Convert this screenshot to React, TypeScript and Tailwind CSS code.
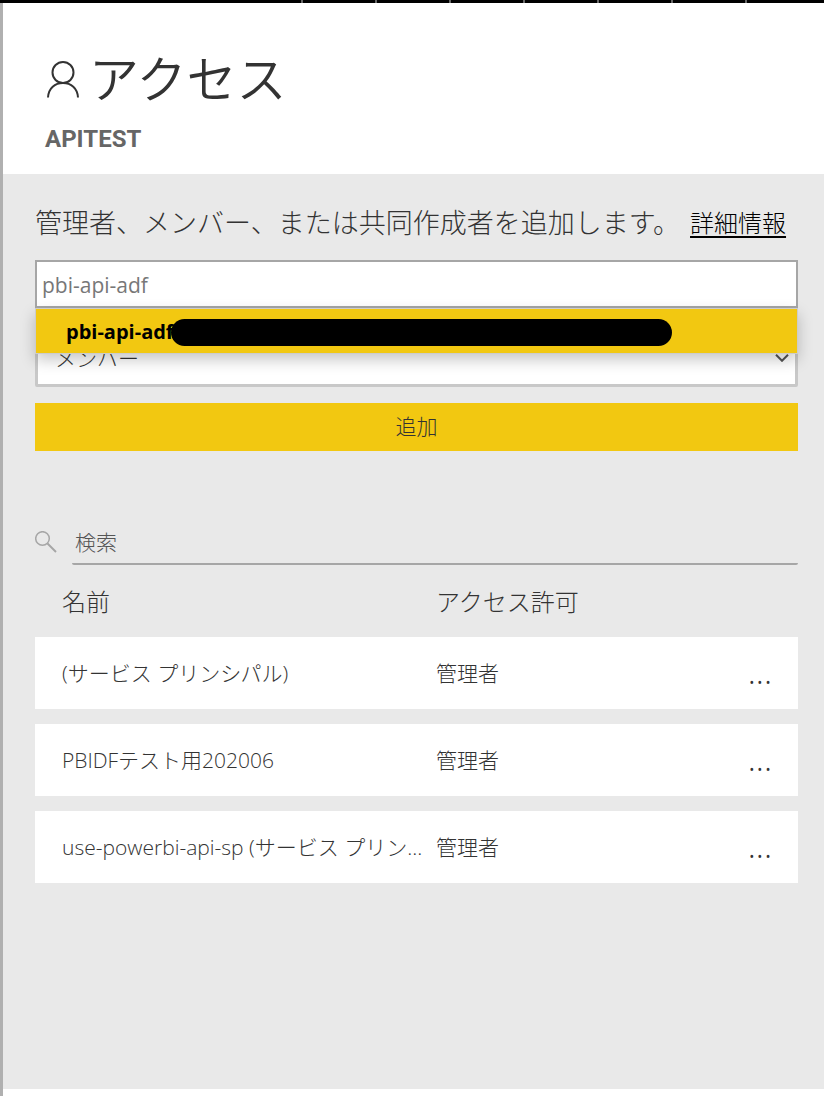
import { useState } from "react";

const ticks = [0, 1, 2, 3, 4, 5, 6];

const members = [
  { name: "(サービス プリンシパル)", role: "管理者" },
  { name: "PBIDFテスト用202006", role: "管理者" },
  { name: "use-powerbi-api-sp (サービス プリン...", role: "管理者" },
];

function PersonIcon() {
  return (
    <svg className="h-[37px] w-8 shrink-0" viewBox="0 0 32 37" fill="none" stroke="#333" strokeWidth="2" aria-hidden="true">
      <circle cx="16" cy="11.5" r="10.5" />
      <path d="M1 36.5C1.500 27 8 22 16 22s14.500 5 15 14.500" />
    </svg>
  );
}

function SearchIcon() {
  return (
    <svg className="h-[22px] w-[22px] shrink-0" viewBox="0 0 22 22" fill="none" stroke="#a6a6a6" aria-hidden="true">
      <circle cx="7.500" cy="7.500" r="6.800" strokeWidth="1.500" />
      <path d="M12.500 12.500L21 21" strokeWidth="2" />
    </svg>
  );
}

function ChevronIcon() {
  return (
    <svg
      className="pointer-events-none absolute right-[9px] top-[23px] h-2 w-[14px]"
      viewBox="0 0 14 8"
      fill="none"
      stroke="#555"
      strokeWidth="2"
      aria-hidden="true"
    >
      <path d="M1 .8l6 6 6-6" />
    </svg>
  );
}

export default function App() {
  const [query, setQuery] = useState("pbi-api-adf");

  return (
    <div className="flex min-h-screen flex-col bg-white font-['Open_Sans','Noto_Sans_CJK_JP',sans-serif] text-[#333]">
      <div className="flex h-[3px] justify-end gap-[72px] bg-black pr-[77px]">
        {ticks.map((t) => (
          <span key={t} className="w-[2px] shrink-0 bg-[#666]" />
        ))}
      </div>
      <div className="flex grow border-l-[3px] border-[#b0b0b0]">
        <main className="flex min-w-0 grow flex-col">
          <header className="flex h-[171px] flex-col px-[42px] pt-11">
            <h1 className="flex items-center gap-[10px] pl-[2px] text-[50px] font-[350] leading-[64px]">
              <PersonIcon />
              アクセス
            </h1>
            <p className="mt-3 font-['Roboto',sans-serif] text-[24px] font-bold leading-8 text-[#666]">APITEST</p>
          </header>

          <div className="grow bg-[#e9e9e9] pl-8 pr-[26px] pt-[29px]">
            <div className="flex h-10 items-center gap-[10px] whitespace-nowrap">
              <label htmlFor="member" className="text-[27px] font-light leading-10">
                管理者、メンバー、または共同作成者を追加します。
              </label>
              <a href="#details" className="text-[24px] font-light leading-10 text-black underline decoration-2 underline-offset-4">
                詳細情報
              </a>
            </div>

            <div className="relative mt-[17px]">
              <input
                id="member"
                type="text"
                value={query}
                onChange={(e) => setQuery(e.target.value)}
                className="block h-12 w-full border-2 border-[#a6a6a6] bg-white px-[5px] pt-[2px] text-[21px] font-normal text-[#777] outline-none"
              />
              <ul className="absolute inset-x-0 top-full z-10 border border-[#ccc] bg-[#f2c811] shadow-[0_6px_14px_rgba(0,0,0,0.22)]">
                <li className="flex h-11 items-center">
                  <button type="button" className="pl-[30px] pt-[2px] text-[20px] font-bold text-black">
                    pbi-api-adf
                  </button>
                  <span className="absolute left-[135px] right-[125px] top-[10px] h-[27px] rounded-full bg-black" />
                </li>
              </ul>
            </div>

            <div className="relative mt-[23px]">
              <select
                aria-label="アクセス許可"
                className="block h-14 w-full appearance-none rounded-[2px] border-[3px] border-[#c8c8c8] bg-white pl-[17px] text-[21px] font-light text-[#333]"
              >
                <option>メンバー</option>
              </select>
              <ChevronIcon />
            </div>

            <button type="button" className="mt-4 block h-12 w-full bg-[#f2c811] text-[21px] font-light text-[#333]">
              追加
            </button>

            <div className="mt-[68px] flex items-center gap-[15px]">
              <SearchIcon />
              <input
                type="search"
                aria-label="検索"
                placeholder="検索"
                className="h-[46px] min-w-0 grow rounded-[2px] border-b-2 border-[#a6a6a6] bg-transparent px-[3px] pt-[2px] text-[21px] font-light outline-none placeholder:text-[#555]"
              />
            </div>

            <table className="w-full table-fixed border-separate border-spacing-x-0 border-spacing-y-[15px] text-left">
              <thead>
                <tr className="h-[42px] text-[24px] leading-8">
                  <th className="w-[401px] pb-0 pl-[27px] pt-[2px] font-light">名前</th>
                  <th className="pb-0 pt-[2px] font-light">アクセス許可</th>
                  <th className="w-20" aria-label="操作" />
                </tr>
              </thead>
              <tbody>
                {members.map((m) => (
                  <tr key={m.name} className="h-[72px] bg-white text-[21px] font-light leading-8">
                    <td className="truncate pl-[27px] pr-2">{m.name}</td>
                    <td>{m.role}</td>
                    <td className="pr-[26px] text-right">
                      <button type="button" aria-label="その他のオプション" className="text-[34px] leading-8">
                        ...
                      </button>
                    </td>
                  </tr>
                ))}
              </tbody>
            </table>
          </div>
          <div className="h-[7px]" />
        </main>
      </div>
    </div>
  );
}
